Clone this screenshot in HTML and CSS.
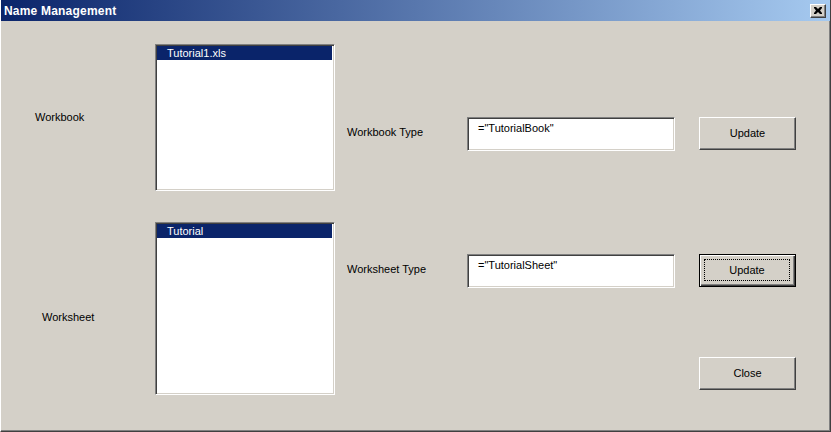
FILE: index.html
```html
<!DOCTYPE html>
<html>
<head>
<meta charset="utf-8">
<title>Name Management</title>
<link rel="stylesheet" href="styles.css">
</head>
<body>
<div class="window">
  <div class="titlebar">
    <span class="title">Name Management</span>
    <span class="close-btn">
      <svg width="8" height="7" viewBox="0 0 8 7"><path d="M0 0h2l2 2 2-2h2v1L6 3.5 8 6v1H6L4 5 2 7H0V6l2-2.5L0 1z" fill="#000"/></svg>
    </span>
  </div>
  <div class="client">
    <div class="section section-book">
      <div class="side-label label-book">Workbook</div>
      <div class="listbox list-book">
        <div class="item selected">Tutorial1.xls</div>
      </div>
      <div class="right">
        <div class="type-row row-book">
          <div class="type-label">Workbook Type</div>
          <div class="textbox">="TutorialBook"</div>
          <div class="button"><span class="caption">Update</span></div>
        </div>
      </div>
    </div>
    <div class="section section-sheet">
      <div class="side-label label-sheet">Worksheet</div>
      <div class="listbox list-sheet">
        <div class="item selected">Tutorial</div>
      </div>
      <div class="right">
        <div class="type-row row-sheet">
          <div class="type-label">Worksheet Type</div>
          <div class="textbox">="TutorialSheet"</div>
          <div class="button default"><span class="caption focus">Update</span></div>
        </div>
        <div class="close-row">
          <div class="button"><span class="caption">Close</span></div>
        </div>
      </div>
    </div>
  </div>
</div>
</body>
</html>
```

FILE: styles.css
```css
html, body {
  margin: 0;
  padding: 0;
  background: #d4d0c8;
}

body {
  font-family: "Liberation Sans", Arial, sans-serif;
  font-size: 11px;
  color: #000;
}

.window {
  width: 831px;
  height: 432px;
  box-sizing: border-box;
  background: #d4d0c8;
  border-left: 1px solid #ffffff;
  border-right: 1px solid #404040;
  border-bottom: 1px solid #404040;
  box-shadow: inset -1px -1px 0 #808080;
  display: flex;
  flex-direction: column;
  overflow: hidden;
}

.titlebar {
  height: 21px;
  margin-left: -1px;
  margin-right: -1px;
  background: linear-gradient(90deg, #0a246a 0%, #a6caf0 100%);
  display: flex;
  align-items: center;
  justify-content: space-between;
  padding: 0 5px 0 4px;
}

.title {
  color: #fff;
  font-weight: bold;
  font-size: 12px;
  letter-spacing: 0.2px;
}

.close-btn {
  width: 16px;
  height: 14px;
  box-sizing: border-box;
  background: #d4d0c8;
  border: 1px solid;
  border-color: #fff #404040 #404040 #fff;
  box-shadow: inset -1px -1px 0 #808080;
  display: flex;
  align-items: center;
  justify-content: center;
  padding-bottom: 1px;
}

.client {
  display: flex;
  flex-direction: column;
  flex: 1;
}

.section {
  display: flex;
  align-items: flex-start;
}

.section-book {
  margin-top: 23px;
}

.section-sheet {
  margin-top: 31px;
}

.side-label {
  width: 154px;
  box-sizing: border-box;
  line-height: 13px;
}

.label-book {
  padding-left: 34px;
  margin-top: 67px;
}

.label-sheet {
  padding-left: 41px;
  margin-top: 89px;
}

.listbox {
  width: 180px;
  box-sizing: border-box;
  background: #fff;
  border: 1px solid;
  border-color: #808080 #ffffff #ffffff #808080;
  box-shadow: inset 1px 1px 0 #404040, inset -1px -1px 0 #d4d0c8;
  padding: 1px 2px 0 1px;
}

.list-book {
  height: 147px;
}

.list-sheet {
  height: 173px;
}

.item {
  height: 14px;
  line-height: 14px;
  padding-left: 10px;
}

.item.selected {
  background: #0a246a;
  color: #fff;
}

.right {
  display: flex;
  flex-direction: column;
}

.type-row {
  display: flex;
  align-items: flex-start;
}

.row-book {
  margin-top: 73px;
}

.row-sheet {
  margin-top: 32px;
}

.type-label {
  width: 132px;
  box-sizing: border-box;
  padding-left: 12px;
  line-height: 13px;
  margin-top: 9px;
}

.textbox {
  width: 208px;
  height: 34px;
  box-sizing: border-box;
  background: #fff;
  border: 1px solid;
  border-color: #808080 #ffffff #ffffff #808080;
  box-shadow: inset 1px 1px 0 #404040, inset -1px -1px 0 #d4d0c8;
  padding: 4px 0 0 10px;
  line-height: 13px;
}

.button {
  width: 97px;
  height: 33px;
  box-sizing: border-box;
  margin-left: 24px;
  background: #d4d0c8;
  border: 1px solid;
  border-color: #ffffff #404040 #404040 #ffffff;
  box-shadow: inset -1px -1px 0 #808080;
  display: flex;
  align-items: center;
  justify-content: center;
}

.button.default {
  border: 1px solid #000;
  box-shadow: inset 1px 1px 0 #fff, inset -1px -1px 0 #404040, inset -2px -2px 0 #808080;
  padding: 4px 5px 5px 4px;
}

.caption {
  line-height: 13px;
}

.caption.focus {
  flex: 1;
  align-self: stretch;
  border: 1px dotted #000;
  display: flex;
  align-items: center;
  justify-content: center;
}

.close-row {
  display: flex;
  justify-content: flex-end;
  margin-top: 69px;
}
```
